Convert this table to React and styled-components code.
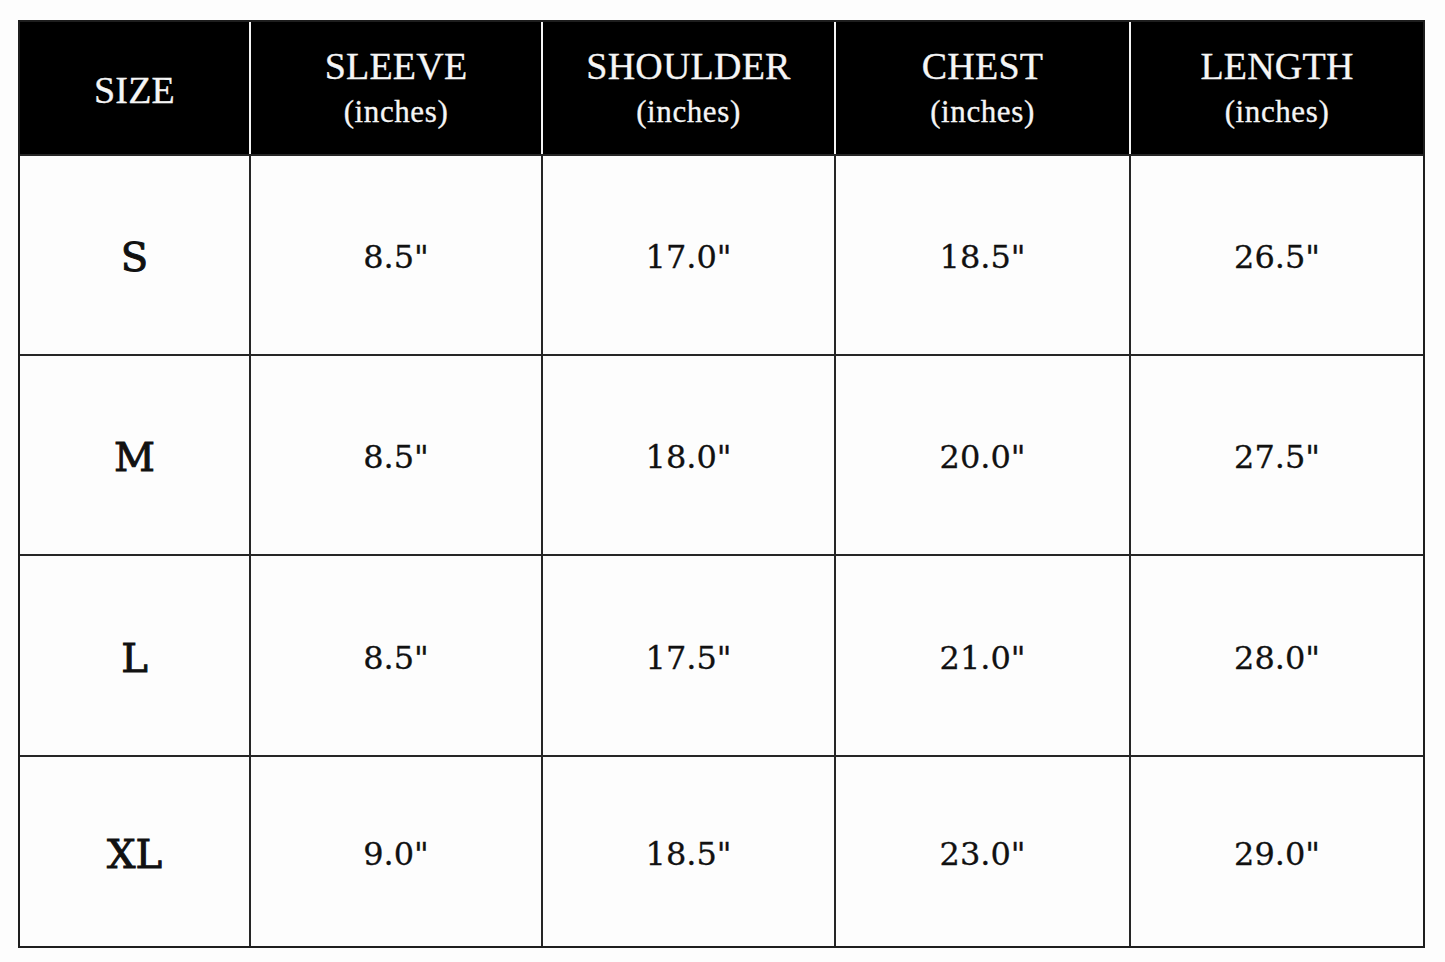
import React from 'react';
import styled, { createGlobalStyle } from 'styled-components';

const GlobalStyle = createGlobalStyle`
  html, body {
    margin: 0;
    padding: 0;
    background: #fdfdfd;
  }
`

const Page = styled.div`
  padding: 20px 0 0 18px;
`

const Chart = styled.div`
  width: 1407px;
  border: 2px solid #1e1e1e;
  box-sizing: border-box;
  background: #262626;
  display: grid;
  grid-template-rows: 132px 198px 198px 199px 189px;
  row-gap: 2px;
`

const Row = styled.div`
  display: grid;
  grid-template-columns: 229px 290px 291px 293px 292px;
  column-gap: 2px;
  background: ${p => (p.$head ? '#f4f4f4' : '#262626')};
`

const HeadCell = styled.div`
  background: #000;
  color: #f5f5f5;
  display: flex;
  flex-direction: column;
  align-items: center;
  justify-content: center;
  font-family: "Liberation Serif", "Times New Roman", serif;
  padding-top: ${p => (p.$single ? '3px' : '0')};
`

const HeadTitle = styled.div`
  font-size: 38px;
  line-height: 44px;
  letter-spacing: 0.2px;
  -webkit-text-stroke: 0.3px;
`

const HeadUnit = styled.div`
  font-size: 31px;
  line-height: 40px;
  margin-top: 4px;
  letter-spacing: 0.6px;
  -webkit-text-stroke: 0.3px;
`

const Cell = styled.div`
  background: #fdfdfd;
  color: #111;
  display: flex;
  align-items: center;
  justify-content: center;
  font-family: "DejaVu Serif", "Liberation Serif", serif;
  font-size: ${p => (p.$size ? '40px' : '32px')};
  -webkit-text-stroke: ${p => (p.$size ? '1px' : '0.3px')};
  padding-top: 4px;
`

const columns = ['SLEEVE', 'SHOULDER', 'CHEST', 'LENGTH']

const sizes = [
  { size: 'S', values: ['8.5"', '17.0"', '18.5"', '26.5"'] },
  { size: 'M', values: ['8.5"', '18.0"', '20.0"', '27.5"'] },
  { size: 'L', values: ['8.5"', '17.5"', '21.0"', '28.0"'] },
  { size: 'XL', values: ['9.0"', '18.5"', '23.0"', '29.0"'] },
]

const App = () => {
  return (
    <Page>
      <GlobalStyle />
      <Chart>
        <Row $head>
          <HeadCell $single>
            <HeadTitle>SIZE</HeadTitle>
          </HeadCell>
          {columns.map(c => (
            <HeadCell key={c}>
              <HeadTitle>{c}</HeadTitle>
              <HeadUnit>(inches)</HeadUnit>
            </HeadCell>
          ))}
        </Row>
        {sizes.map(r => (
          <Row key={r.size}>
            <Cell $size>{r.size}</Cell>
            {r.values.map((v, i) => (
              <Cell key={i}>{v}</Cell>
            ))}
          </Row>
        ))}
      </Chart>
    </Page>
  )
}

export default App
